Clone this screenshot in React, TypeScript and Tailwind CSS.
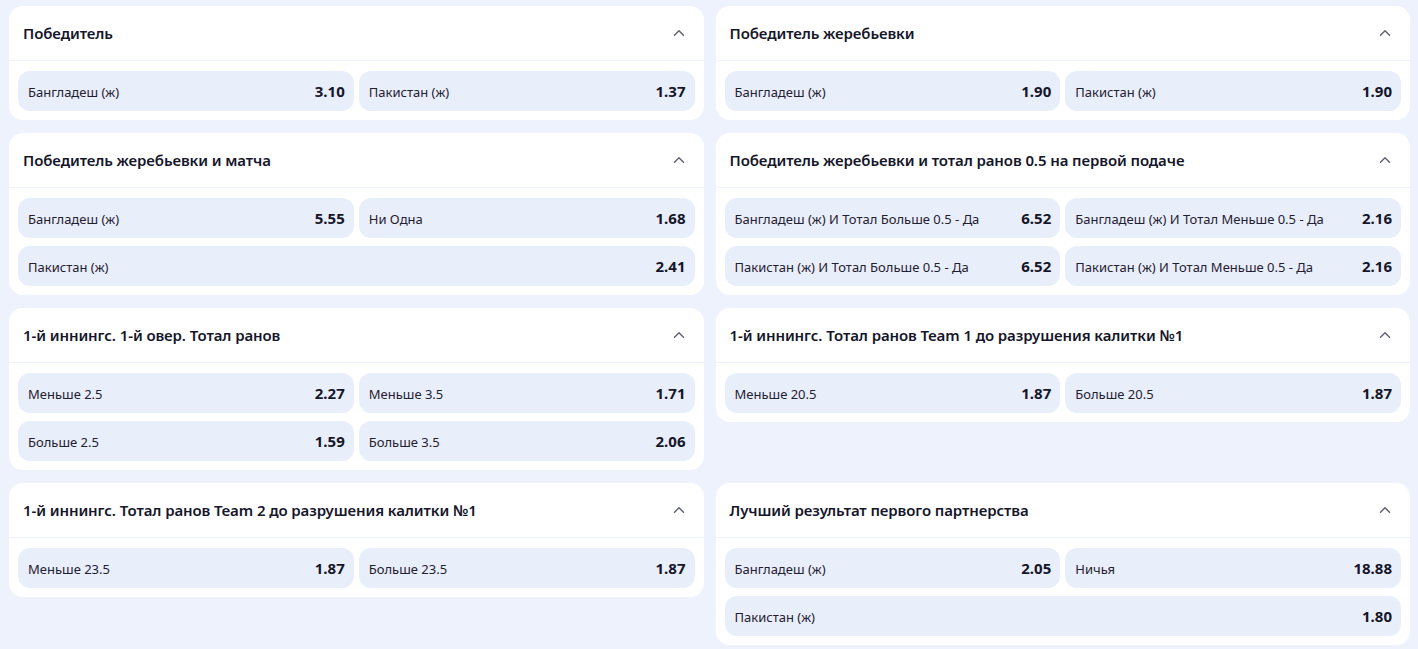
import { ChevronUp } from "lucide-react";

type Odd = { label: string; value: string; full?: boolean };
type Market = { title: string; odds: Odd[] };

const left: Market[] = [
  {
    title: "Победитель",
    odds: [
      { label: "Бангладеш (ж)", value: "3.10" },
      { label: "Пакистан (ж)", value: "1.37" },
    ],
  },
  {
    title: "Победитель жеребьевки и матча",
    odds: [
      { label: "Бангладеш (ж)", value: "5.55" },
      { label: "Ни Одна", value: "1.68" },
      { label: "Пакистан (ж)", value: "2.41", full: true },
    ],
  },
  {
    title: "1-й иннингс. 1-й овер. Тотал ранов",
    odds: [
      { label: "Меньше 2.5", value: "2.27" },
      { label: "Меньше 3.5", value: "1.71" },
      { label: "Больше 2.5", value: "1.59" },
      { label: "Больше 3.5", value: "2.06" },
    ],
  },
  {
    title: "1-й иннингс. Тотал ранов Team 2 до разрушения калитки №1",
    odds: [
      { label: "Меньше 23.5", value: "1.87" },
      { label: "Больше 23.5", value: "1.87" },
    ],
  },
];

const right: Market[] = [
  {
    title: "Победитель жеребьевки",
    odds: [
      { label: "Бангладеш (ж)", value: "1.90" },
      { label: "Пакистан (ж)", value: "1.90" },
    ],
  },
  {
    title: "Победитель жеребьевки и тотал ранов 0.5 на первой подаче",
    odds: [
      { label: "Бангладеш (ж) И Тотал Больше 0.5 - Да", value: "6.52" },
      { label: "Бангладеш (ж) И Тотал Меньше 0.5 - Да", value: "2.16" },
      { label: "Пакистан (ж) И Тотал Больше 0.5 - Да", value: "6.52" },
      { label: "Пакистан (ж) И Тотал Меньше 0.5 - Да", value: "2.16" },
    ],
  },
  {
    title: "1-й иннингс. Тотал ранов Team 1 до разрушения калитки №1",
    odds: [
      { label: "Меньше 20.5", value: "1.87" },
      { label: "Больше 20.5", value: "1.87" },
    ],
  },
  {
    title: "Лучший результат первого партнерства",
    odds: [
      { label: "Бангладеш (ж)", value: "2.05" },
      { label: "Ничья", value: "18.88" },
      { label: "Пакистан (ж)", value: "1.80", full: true },
    ],
  },
];

function MarketCard({ market }: { market: Market }) {
  return (
    <div className="bg-white rounded-[14px]">
      <div className="h-[55px] flex items-center justify-between pl-[14px] pr-[16px] border-b border-[#edf1fb]">
        <h3 className="text-[15px] font-semibold text-[#15162a] tracking-[-0.1px]">{market.title}</h3>
        <ChevronUp className="w-[18px] h-[18px] text-[#62656f]" strokeWidth={2} />
      </div>
      <div className="grid grid-cols-2 gap-x-[5px] gap-y-[8px] px-[9px] pt-[10px] pb-[9px]">
        {market.odds.map((o, i) => (
          <div
            key={i}
            className={`h-[40px] rounded-[12px] bg-[#e9eefb] flex items-center justify-between pl-[10px] pr-[9px] ${o.full ? "col-span-2" : ""}`}
          >
            <span className="pt-[3px] text-[13px] text-[#1f2030]">{o.label}</span>
            <span className="pt-[1px] text-[15px] font-bold text-[#15162a]">{o.value}</span>
          </div>
        ))}
      </div>
    </div>
  );
}

export default function App() {
  return (
    <div
      className="min-h-[649px] bg-[#eef2fc] pl-[9px] pr-[8px] pt-[6px]"
      style={{ fontFamily: '"Noto Sans", "Open Sans", sans-serif' }}
    >
      <div className="grid grid-cols-2 gap-x-[12px] gap-y-[13px] items-start">
        {left.map((m, i) => [
          <MarketCard key={`l${i}`} market={m} />,
          <MarketCard key={`r${i}`} market={right[i]} />,
        ])}
      </div>
    </div>
  );
}
